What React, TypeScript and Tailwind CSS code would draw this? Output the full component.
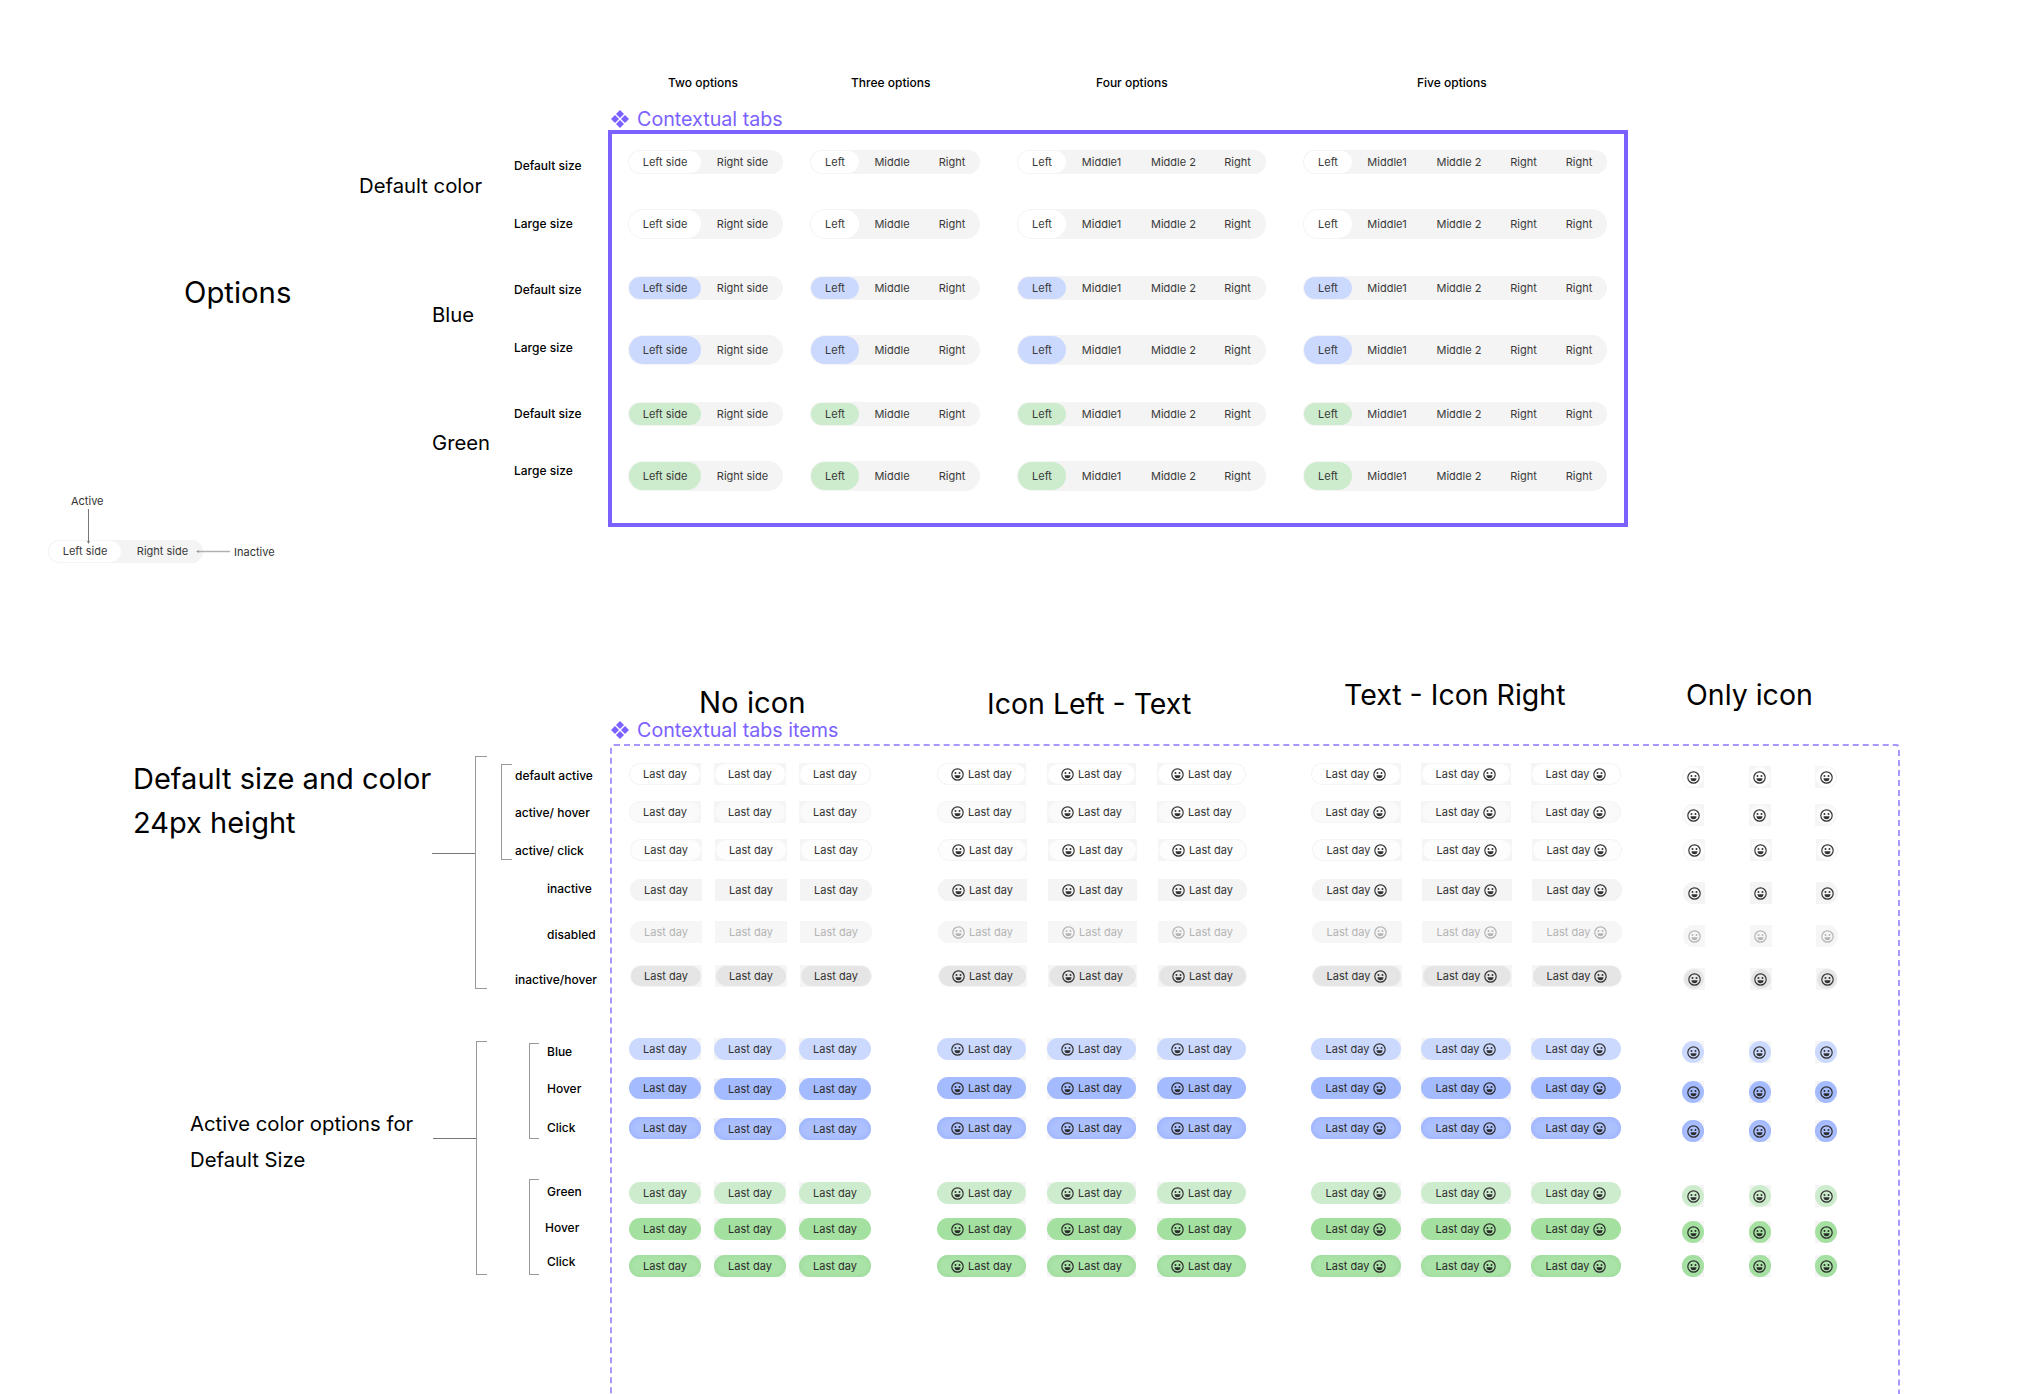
const optionGroups = [
    [
        { label: "Left side", w: "w-[74px]" },
        { label: "Right side", w: "w-[81px]" },
    ],
    [
        { label: "Left", w: "w-[50px]" },
        { label: "Middle", w: "w-[64px]" },
        { label: "Right", w: "w-[56px]" },
    ],
    [
        { label: "Left", w: "w-[50px]" },
        { label: "Middle1", w: "w-[69px]" },
        { label: "Middle 2", w: "w-[75px]" },
        { label: "Right", w: "w-[55px] pr-[3px]" },
    ],
    [
        { label: "Left", w: "w-[50px]" },
        { label: "Middle1", w: "w-[68px]" },
        { label: "Middle 2", w: "w-[76px]" },
        { label: "Right", w: "w-[54px] pr-[2px]" },
        { label: "Right", w: "w-[56px]" },
    ],
];

const groupGaps = ["", "ml-[27px]", "ml-[37px]", "ml-[37px]"];

const optionRows = [
    { active: "bg-white", height: "h-6", gap: "" },
    { active: "bg-white", height: "h-[30px]", gap: "mt-[35px]" },
    { active: "bg-[#ccd9ff]", height: "h-6", gap: "mt-[37px]" },
    { active: "bg-[#ccd9ff]", height: "h-[30px]", gap: "mt-[35px]" },
    { active: "bg-[#cdeccd]", height: "h-6", gap: "mt-[37px]" },
    { active: "bg-[#cdeccd]", height: "h-[30px]", gap: "mt-[35px]" },
];

const sizeLabels = [
    { label: "Default size", gap: "mt-[158px]" },
    { label: "Large size", gap: "mt-[42px]" },
    { label: "Default size", gap: "mt-[50px]" },
    { label: "Large size", gap: "mt-[42px]" },
    { label: "Default size", gap: "mt-[50px]" },
    { label: "Large size", gap: "mt-[41px]" },
];

type ItemRow = {
    track: string;
    pill: string;
    text: string;
    gap: string;
    iconGap: string;
    shift?: boolean;
    drop?: boolean;
};

const itemRows: ItemRow[] = [
    { track: "bg-[#f5f5f5]", pill: "m-px bg-white", text: "text-[#333333]", gap: "", iconGap: "" },
    { track: "bg-[#f5f5f5]", pill: "m-px bg-[#fafafa]", text: "text-[#333333]", gap: "mt-4", iconGap: "mt-4" },
    { track: "bg-[#f5f5f5]", pill: "m-px bg-[#fdfdfd]", text: "text-[#333333]", gap: "mt-4", iconGap: "mt-[13px]", shift: true },
    { track: "bg-[#f4f4f4]", pill: "bg-[#f4f4f4]", text: "text-[#333333]", gap: "mt-[18px]", iconGap: "mt-[21px]", shift: true },
    { track: "bg-[#f6f6f6]", pill: "bg-[#f6f6f6]", text: "text-[#b4b4b4]", gap: "mt-5", iconGap: "mt-[21px]", shift: true },
    { track: "bg-[#f5f5f5]", pill: "m-px bg-[#e5e5e5]", text: "text-[#333333]", gap: "mt-[22px]", iconGap: "mt-[21px]", shift: true },
    { track: "bg-[#f5f5f5]", pill: "bg-[#ccd9ff]", text: "text-[#333333]", gap: "mt-[51px]", iconGap: "mt-[51px]" },
    { track: "bg-[#f5f5f5]", pill: "bg-[#a5bbff]", text: "text-[#2c2c2c]", gap: "mt-[17px]", iconGap: "mt-[18px]", drop: true },
    { track: "bg-[#f5f5f5]", pill: "bg-[#adc1ff] shadow-[inset_0_0_6px_#97aefc]", text: "text-[#2c2c2c]", gap: "mt-[18px]", iconGap: "mt-[17px]", drop: true },
    { track: "bg-[#f5f5f5]", pill: "bg-[#cdeccd]", text: "text-[#333333]", gap: "mt-[43px]", iconGap: "mt-[43px]" },
    { track: "bg-[#f5f5f5]", pill: "bg-[#a4e1a0]", text: "text-[#2c2c2c]", gap: "mt-[14px]", iconGap: "mt-[14px]" },
    { track: "bg-[#f5f5f5]", pill: "bg-[#aae3a7] shadow-[inset_0_0_6px_#9bd99a]", text: "text-[#2c2c2c]", gap: "mt-[15px]", iconGap: "mt-3" },
];

const cellCorners = ["rounded-l-full", "", "rounded-r-full"];

const labelClass = "whitespace-nowrap text-[12px] font-medium leading-4";
const bracketClass = "shrink-0 border-y border-l border-[#999999]";

function Smile() {
    return (
        <svg
            viewBox="0 0 24 24"
            className="h-[13px] w-[13px] shrink-0"
            fill="none"
            stroke="currentColor"
            strokeWidth="2.2"
        >
            <circle cx="12" cy="12" r="10.5" />
            <circle cx="8.3" cy="9.3" r="1.8" fill="currentColor" stroke="none" />
            <circle cx="15.7" cy="9.3" r="1.8" fill="currentColor" stroke="none" />
            <path d="M6.5 13.5h11a5.5 5.5 0 0 1-11 0z" fill="currentColor" stroke="none" />
        </svg>
    );
}

function Diamonds() {
    return (
        <svg viewBox="0 0 18 18" className="h-[18px] w-[18px]" fill="#7b61ff">
            <polygon points="9,0 13,4 9,8 5,4" />
            <polygon points="9,10 13,14 9,18 5,14" />
            <polygon points="4,5 8,9 4,13 0,9" />
            <polygon points="14,5 18,9 14,13 10,9" />
        </svg>
    );
}

function Title({ margin, children }: { margin: string; children: React.ReactNode }) {
    return (
        <div className={`flex items-center gap-2 whitespace-nowrap text-[19.7px] leading-[22px] text-[#7b61ff] ${margin}`}>
            <Diamonds />
            {children}
        </div>
    );
}

function Tabs({
    group,
    active,
    height,
}: {
    group: { label: string; w: string }[];
    active: string;
    height: string;
}) {
    return (
        <div className={`flex rounded-full bg-[#f4f4f4] text-[11px] text-[#3a3a3a] ${height}`}>
            {group.map((seg, i) => (
                <div key={i} className={`flex items-center justify-center p-px ${seg.w}`}>
                    <span
                        className={`flex h-full w-full items-center justify-center rounded-full ${
                            i === 0 ? active : ""
                        }`}
                    >
                        {seg.label}
                    </span>
                </div>
            ))}
        </div>
    );
}

function ItemColumn({
    width,
    gap,
    margin,
    mode,
}: {
    width: string;
    gap: string;
    margin: string;
    mode: "none" | "left" | "right" | "only";
}) {
    return (
        <div className={`flex flex-col ${margin}`}>
            {itemRows.map((row, r) => (
                <div
                    key={r}
                    className={`flex h-[22px] items-start ${gap} ${mode === "only" ? row.iconGap : row.gap} ${
                        row.shift ? "ml-px" : ""
                    }`}
                >
                    {[0, 1, 2].map((c) => (
                        <div
                            key={c}
                            className={`flex h-[22px] ${width} ${row.track} ${cellCorners[c]} ${
                                mode === "none" && row.drop && c > 0 ? "mt-px" : ""
                            }`}
                        >
                            <div
                                className={`flex min-w-0 flex-1 items-center justify-center gap-1 rounded-full text-[11px] ${row.pill} ${row.text}`}
                            >
                                {mode === "left" || mode === "only" ? <Smile /> : null}
                                {mode === "only" ? null : <span>Last day</span>}
                                {mode === "right" ? <Smile /> : null}
                            </div>
                        </div>
                    ))}
                </div>
            ))}
        </div>
    );
}

function Sample() {
    return (
        <div className="mt-[180px] flex flex-col items-start">
            <div className="ml-[71px] text-[11px] leading-4 text-[#333333]">Active</div>
            <svg viewBox="0 0 5 35" className="relative z-10 ml-[86px] h-[35px] w-[5px]">
                <line x1="2.5" y1="0" x2="2.5" y2="33" stroke="#777777" />
                <polygon points="1,32 4,32 2.5,35" fill="#777777" />
            </svg>
            <div className="-mt-1 ml-12 flex items-center">
                <Tabs
                    group={[
                        { label: "Left side", w: "w-[74px]" },
                        { label: "Right side", w: "w-[81px]" },
                    ]}
                    active="bg-white"
                    height="h-[23px]"
                />
                <svg viewBox="0 0 34 5" className="relative -ml-[7px] h-[5px] w-[34px]">
                    <line x1="3" y1="2.5" x2="34" y2="2.5" stroke="#b0b0b0" strokeWidth="1.5" />
                    <polygon points="0,2.5 3,1 3,4" fill="#999999" />
                </svg>
                <div className="ml-1 text-[11px] leading-4 text-[#333333]">Inactive</div>
            </div>
        </div>
    );
}

export default function App() {
    return (
        <div className="h-[1394px] w-[2042px] overflow-hidden bg-white [font-family:Inter,sans-serif] text-black">

            {/* Options */}

            <section className="flex h-[527px]">

                <div className="w-[359px] shrink-0">
                    <div className="ml-[184px] pt-[273px] text-[29.3px] leading-10">Options</div>
                    <Sample />
                </div>

                <div className="w-[155px] shrink-0 text-[20.3px] leading-[30px]">
                    <div className="mt-[171px]">Default color</div>
                    <div className="ml-[73px] mt-[99px]">Blue</div>
                    <div className="ml-[73px] mt-[98px]">Green</div>
                </div>

                <div className="w-[94px] shrink-0">
                    {sizeLabels.map((item, i) => (
                        <div key={i} className={`${labelClass} ${item.gap}`}>
                            {item.label}
                        </div>
                    ))}
                </div>

                <div className="pt-[75px]">
                    <div className={`flex h-[33px] ${labelClass}`}>
                        <div className="w-[243px] pl-[60px]">Two options</div>
                        <div className="w-[245px]">Three options</div>
                        <div className="w-[321px]">Four options</div>
                        <div>Five options</div>
                    </div>

                    <Title margin="ml-[3px]">Contextual tabs</Title>

                    <div className="box-border h-[397px] w-[1020px] border-4 border-[#7b61ff] pl-4 pt-4">
                        {optionRows.map((row, r) => (
                            <div key={r} className={`flex ${row.gap}`}>
                                {optionGroups.map((group, g) => (
                                    <div key={g} className={groupGaps[g]}>
                                        <Tabs group={group} active={row.active} height={row.height} />
                                    </div>
                                ))}
                            </div>
                        ))}
                    </div>
                </div>
            </section>

            {/* Contextual tabs items */}

            <section className="flex">

                <div className="w-[432px] shrink-0 whitespace-nowrap">
                    <div className="ml-[133px] mt-[230px] text-[29px] leading-[44px]">
                        Default size and color
                        <br />
                        24px height
                    </div>
                    <div className="ml-[190px] mt-[261px] text-[20.3px] leading-9">
                        Active color options for
                        <br />
                        Default Size
                    </div>
                </div>

                <div className="w-[178px] shrink-0 pt-[229px]">

                    {/* Default states */}

                    <div className="flex items-start">
                        <div className="mt-[97px] h-px w-[43px] bg-[#777777]" />
                        <div className={`h-[233px] w-3 ${bracketClass}`} />
                        <div className="ml-3.5 mt-2">
                            <div className="flex items-start">
                                <div className={`h-24 w-[11px] ${bracketClass}`} />
                                <div className="ml-[3px] pt-1">
                                    <div className={labelClass}>default active</div>
                                    <div className={`mt-[21px] ${labelClass}`}>active/ hover</div>
                                    <div className={`mt-[22px] ${labelClass}`}>active/ click</div>
                                </div>
                            </div>
                            <div className={`ml-[46px] mt-[21px] ${labelClass}`}>inactive</div>
                            <div className={`ml-[46px] mt-[30px] ${labelClass}`}>disabled</div>
                            <div className={`ml-3.5 mt-[29px] ${labelClass}`}>inactive/hover</div>
                        </div>
                    </div>

                    {/* Colour states */}

                    <div className="ml-px mt-[52px] flex items-start">
                        <div className="mt-[97px] h-px w-[43px] bg-[#777777]" />
                        <div className={`h-[234px] w-[11px] ${bracketClass}`} />
                        <div className="ml-[42px] mt-0.5">
                            <div className="flex items-start">
                                <div className={`h-24 w-2.5 ${bracketClass}`} />
                                <div className="ml-2 pt-px">
                                    <div className={labelClass}>Blue</div>
                                    <div className={`mt-[21px] ${labelClass}`}>Hover</div>
                                    <div className={`mt-[23px] ${labelClass}`}>Click</div>
                                </div>
                            </div>
                            <div className="mt-10 flex items-start">
                                <div className={`h-24 w-2.5 ${bracketClass}`} />
                                <div className="ml-2 pt-[5px]">
                                    <div className={labelClass}>Green</div>
                                    <div className={`-ml-0.5 mt-5 ${labelClass}`}>Hover</div>
                                    <div className={`mt-[18px] ${labelClass}`}>Click</div>
                                </div>
                            </div>
                        </div>
                    </div>
                </div>

                <div className="pt-[153px]">
                    <div className="flex h-[39px] items-start whitespace-nowrap leading-[30px]">
                        <div className="mt-2 w-[377px] pl-[89px] text-[29.3px]">No icon</div>
                        <div className="mt-[9px] w-[357px] text-[28.5px]">Icon Left - Text</div>
                        <div className="w-[342px] text-[28.5px]">Text - Icon Right</div>
                        <div className="text-[28.5px]">Only icon</div>
                    </div>

                    <Title margin="ml-px">Contextual tabs items</Title>

                    <div className="mt-[3px] box-border flex h-[720px] w-[1290px] rounded-[4px] border-2 border-dashed border-[#a997ff] pt-[17px]">
                        <ItemColumn width="w-[72px]" gap="gap-x-[13px]" margin="ml-[17px]" mode="none" />
                        <ItemColumn width="w-[89px]" gap="gap-x-[21px]" margin="ml-[65px]" mode="left" />
                        <ItemColumn width="w-[90px]" gap="gap-x-[20px]" margin="ml-[64px]" mode="right" />
                        <div className="pt-[3px]">
                            <ItemColumn width="w-[22px]" gap="gap-x-[44.5px]" margin="ml-[60px]" mode="only" />
                        </div>
                    </div>
                </div>
            </section>
        </div>
    );
}
